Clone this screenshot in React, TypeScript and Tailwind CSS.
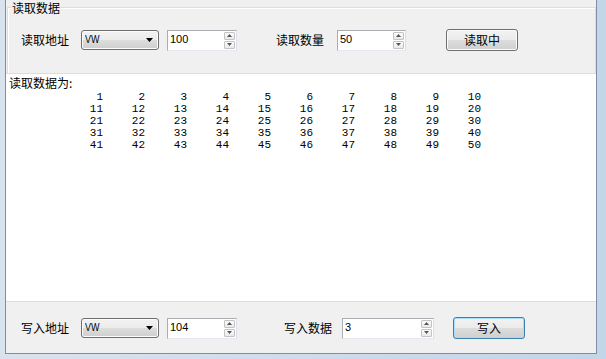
import React from "react";

const rows = [0, 1, 2, 3, 4].map((r) => Array.from({ length: 10 }, (_, c) => r * 10 + c + 1));

const Arrow = ({ up }: { up?: boolean }) => (
  <svg width="5" height="3" viewBox="0 0 5 3">
    <path d={up ? "M0 3h5L2.5 0z" : "M0 0h5L2.5 3z"} fill="#555" />
  </svg>
);

const Combo = () => (
  <div className="w-[78px] h-[20px] rounded-[3px] border border-[#707070] bg-[linear-gradient(#f2f2f2,#ebebeb_50%,#dddddd_50%,#cfcfcf)] shadow-[inset_0_0_0_1px_#fcfcfc] flex items-center pl-[3px] pr-[5px]">
    <span className="flex-1 text-[10px] leading-none font-['Liberation_Sans',sans-serif] scale-x-90 origin-left">VW</span>
    <svg width="7" height="4" viewBox="0 0 7 4">
      <path d="M0 0h7L3.5 4z" fill="#000" />
    </svg>
  </div>
);

const Spin = ({ value, className }: { value: string; className: string }) => (
  <div className={`${className} h-[21px] border border-[#abadb3] border-b-[#e3e9ef] border-r-[#dbdfe6] bg-white flex`}>
    <span className="flex-1 pl-[2px] pt-[2px] text-[11px] leading-[13px] font-['Liberation_Sans',sans-serif]">{value}</span>
    <div className="w-[12px] flex flex-col gap-[1px] py-[1px] pr-[1px]">
      <div className="flex-1 flex items-center justify-center border border-[#c3c3c3] rounded-[1px] bg-[linear-gradient(#fdfdfd,#e8e8e8)]">
        <Arrow up />
      </div>
      <div className="flex-1 flex items-center justify-center border border-[#c3c3c3] rounded-[1px] bg-[linear-gradient(#fdfdfd,#e8e8e8)]">
        <Arrow />
      </div>
    </div>
  </div>
);

const Btn = ({ label, active }: { label: string; active?: boolean }) => (
  <div
    className={`w-[72px] h-[22px] rounded-[3px] border flex items-center justify-center text-[12px] leading-none bg-[linear-gradient(#f2f2f2,#ebebeb_50%,#dddddd_50%,#cfcfcf)] ${
      active ? "border-[#3c7fb1] shadow-[inset_0_0_0_1px_#a9dcf6]" : "border-[#707070] shadow-[inset_0_0_0_1px_#fbfbfb]"
    }`}
  >
    {label}
  </div>
);

export default function App() {
  return (
    <div className="w-[606px] h-[359px] overflow-hidden bg-[linear-gradient(90deg,#d9e3ee,#c3d5e9)] pl-[5px] pr-[9px] pb-[5px] flex text-black font-['Noto_Sans_CJK_SC',sans-serif]">
      <div className="flex-1 flex flex-col bg-[#f0f0f0] border-l border-r border-b border-[#7d8fa5]">
        {/* group box */}
        <div className="h-[73px] pt-[7px] pl-[1px]">
          <div className="relative h-full border border-b-0 border-[#d5dfe5] shadow-[inset_1px_1px_0_#fff]">
            <span className="absolute top-[-7px] left-[3px] px-[1px] bg-[#f0f0f0] text-[12px] leading-[13px]">读取数据</span>
            <div className="pt-[21px] pl-[13px] flex items-center h-[43px]">
              <span className="text-[12px] leading-[14px] w-[48px] shrink-0">读取地址</span>
              <div className="ml-[12px]">
                <Combo />
              </div>
              <Spin value="100" className="ml-[8px] w-[70px]" />
              <span className="ml-[39px] text-[12px] leading-[14px] w-[48px] shrink-0">读取数量</span>
              <Spin value="50" className="ml-[13px] w-[69px]" />
              <div className="ml-[40px]">
                <Btn label="读取中" />
              </div>
            </div>
          </div>
        </div>

        {/* read output */}
        <div className="h-[229px] bg-white border-t border-b border-[#d5dfe5] pt-[1px]">
          <div className="pl-[3px] text-[12px] leading-[16px]">读取数据为:</div>
          <div className="font-['Liberation_Mono',monospace] text-[11px] leading-[12px]">
            {rows.map((row, i) => (
              <div key={i} className="flex pl-[55px]">
                {row.map((n) => (
                  <span key={n} className="w-[42px] text-right">
                    {n}
                  </span>
                ))}
              </div>
            ))}
          </div>
        </div>

        {/* write row */}
        <div className="flex-1 pt-[15px] pl-[15px]">
          <div className="flex items-center h-[22px]">
            <span className="text-[12px] leading-[14px] w-[48px] shrink-0">写入地址</span>
            <div className="ml-[12px]">
              <Combo />
            </div>
            <Spin value="104" className="ml-[8px] w-[70px]" />
            <span className="ml-[47px] text-[12px] leading-[14px] w-[48px] shrink-0">写入数据</span>
            <Spin value="3" className="ml-[10px] w-[92px]" />
            <div className="ml-[19px]">
              <Btn label="写入" active />
            </div>
          </div>
        </div>
      </div>
    </div>
  );
}
